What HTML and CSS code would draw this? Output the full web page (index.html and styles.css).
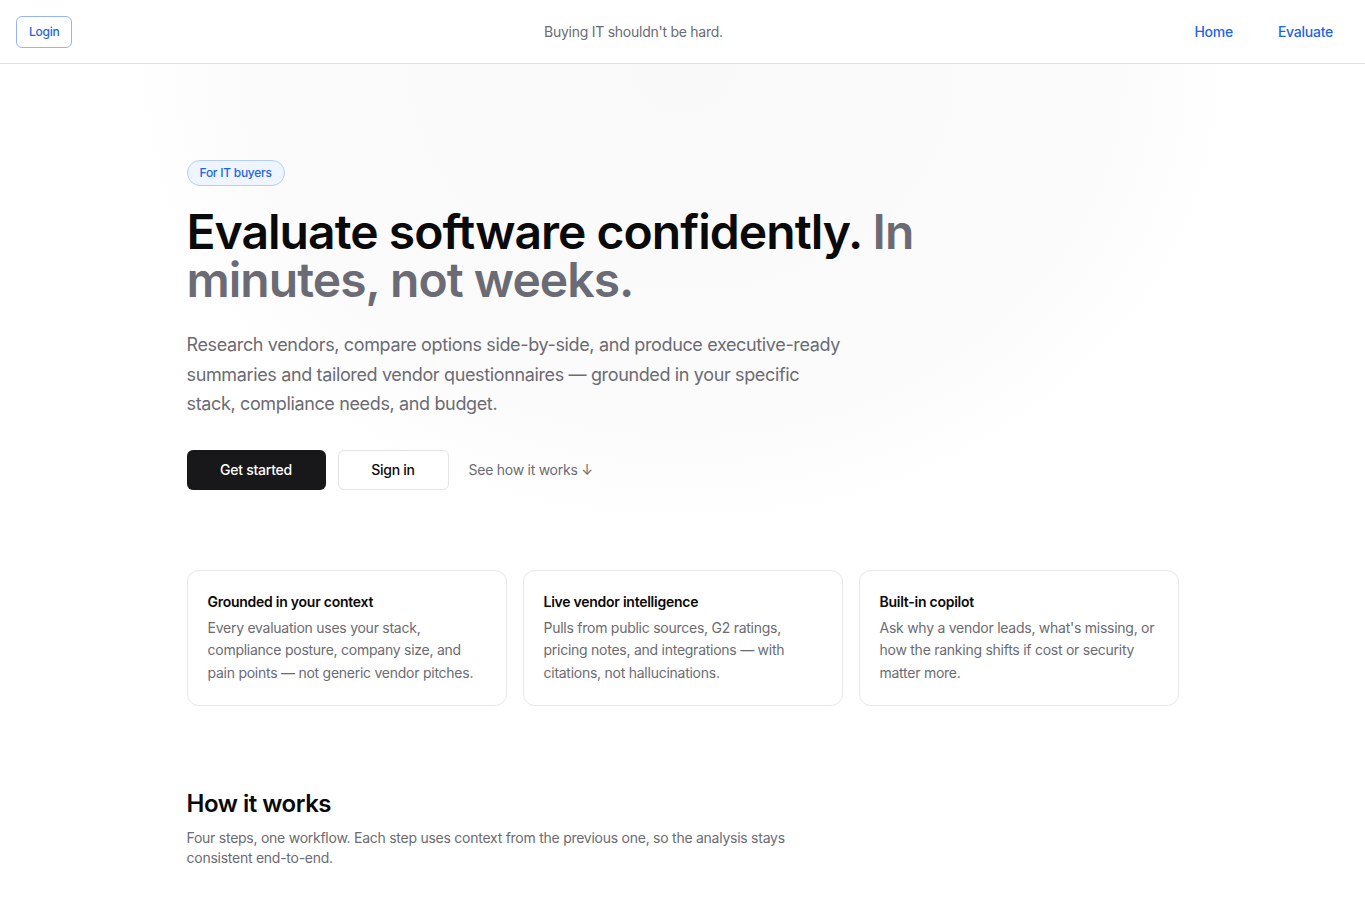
FILE: index.html
```html
<!DOCTYPE html>
<html lang="en">

<head>
    <meta charset="UTF-8">
    <meta name="viewport" content="width=device-width, initial-scale=1.0">
    <title>Buying IT shouldn't be hard</title>
    <link rel="stylesheet" href="styles.css">
</head>

<body>
    <header class="topbar">
        <a class="login" href="#">Login</a>
        <span class="tagline">Buying IT shouldn't be hard.</span>
        <nav class="nav">
            <a href="#">Home</a>
            <a href="#">Evaluate</a>
        </nav>
    </header>

    <main>
        <section class="hero">
            <div class="wrap">
                <span class="badge">For IT buyers</span>
                <h1>Evaluate software confidently. <span class="muted">In minutes, not weeks.</span></h1>
                <p class="lead">Research vendors, compare options side-by-side, and produce executive-ready summaries and tailored vendor questionnaires — grounded in your specific stack, compliance needs, and budget.</p>
                <div class="actions">
                    <a class="btn btn-dark" href="#">Get started</a>
                    <a class="btn btn-light" href="#">Sign in</a>
                    <a class="link" href="#how">See how it works ↓</a>
                </div>
            </div>
        </section>

        <section class="wrap features">
            <div class="card">
                <h3>Grounded in your context</h3>
                <p>Every evaluation uses your stack, compliance posture, company size, and pain points — not generic vendor pitches.</p>
            </div>
            <div class="card">
                <h3>Live vendor intelligence</h3>
                <p>Pulls from public sources, G2 ratings, pricing notes, and integrations — with citations, not hallucinations.</p>
            </div>
            <div class="card">
                <h3>Built-in copilot</h3>
                <p>Ask why a vendor leads, what's missing, or how the ranking shifts if cost or security matter more.</p>
            </div>
        </section>

        <section class="wrap how" id="how">
            <h2>How it works</h2>
            <p class="sub">Four steps, one workflow. Each step uses context from the previous one, so the analysis stays consistent end-to-end.</p>
            <div class="steps">
                <div class="step"><span class="num">1</span><h4>Describe your needs</h4><p>Tell us about your stack, team size, compliance requirements and budget.</p></div>
                <div class="step"><span class="num">2</span><h4>Research vendors</h4><p>We gather live data on the tools that fit your category.</p></div>
                <div class="step"><span class="num">3</span><h4>Compare side-by-side</h4><p>Weighted scoring across the criteria you care about.</p></div>
                <div class="step"><span class="num">4</span><h4>Share the result</h4><p>Export an executive summary and vendor questionnaire.</p></div>
            </div>
        </section>
    </main>
</body>

</html>
```

FILE: styles.css
```css
* {
    padding: 0;
    margin: 0;
    box-sizing: border-box;
}

body {
    font-family: Inter, "Noto Sans", sans-serif;
    letter-spacing: -0.016em;
    color: #0a0a0a;
    background-color: #fff;
}

a {
    text-decoration: none;
}

.topbar {
    height: 64px;
    padding: 0 16px;
    display: flex;
    align-items: center;
    justify-content: space-between;
    border-bottom: 1px solid #d6e2f3;
}

.login {
    height: 32px;
    padding: 0 12px;
    display: flex;
    align-items: center;
    font-size: 12px;
    font-weight: 500;
    color: #1d64e8;
    border: 1px solid #93b5f7;
    border-radius: 6px;
}

.tagline {
    font-size: 14px;
    color: #6b6b73;
}

.nav {
    display: flex;
    gap: 45px;
    padding-right: 16px;
}

.nav a {
    font-size: 14px;
    font-weight: 500;
    color: #1d64e8;
}

.wrap {
    width: 992px;
    margin: 0 auto;
}

.hero {
    padding: 96px 0 80px;
    background: radial-gradient(ellipse 560px 470px at 50% 0, #f9f9fa 0%, #fbfbfb 78%, rgba(255, 255, 255, 0) 100%);
}

.badge {
    display: inline-block;
    height: 26px;
    line-height: 24px;
    padding: 0 12px;
    font-size: 12px;
    font-weight: 500;
    color: #1d64e8;
    background-color: #eff5ff;
    border: 1px solid #b4cdfa;
    border-radius: 13px;
}

h1 {
    margin-top: 22px;
    width: 740px;
    font-size: 48px;
    line-height: 48px;
    font-weight: 600;
    letter-spacing: -0.02em;
    color: #0a0a0a;
}

h1 .muted {
    color: #6b6b75;
}

.lead {
    margin-top: 26px;
    max-width: 660px;
    font-size: 18px;
    line-height: 29.5px;
    letter-spacing: -0.02em;
    color: #6b6b73;
}

.actions {
    margin-top: 31px;
    display: flex;
    align-items: center;
}

.btn {
    height: 40px;
    display: flex;
    align-items: center;
    justify-content: center;
    font-size: 14px;
    font-weight: 500;
    border-radius: 6px;
}

.btn-dark {
    width: 139px;
    color: #fff;
    background-color: #18181b;
}

.btn-light {
    width: 111px;
    margin-left: 12px;
    color: #0a0a0a;
    background-color: #fff;
    border: 1px solid #e4e4e7;
}

.link {
    margin-left: 20px;
    font-size: 14px;
    color: #6b6b73;
}

.features {
    display: grid;
    grid-template-columns: repeat(3, 1fr);
    gap: 16px;
}

.card {
    height: 136px;
    padding: 21px 20px;
    border: 1px solid #e8e8eb;
    border-radius: 12px;
    background-color: #fff;
}

.card h3 {
    font-size: 14px;
    font-weight: 600;
    line-height: 20px;
}

.card p {
    margin-top: 5px;
    font-size: 14px;
    line-height: 22.5px;
    color: #6b6b73;
}

.how {
    padding-top: 82px;
    padding-bottom: 60px;
}

.how h2 {
    font-size: 24px;
    font-weight: 600;
    line-height: 32px;
    letter-spacing: -0.02em;
}

.sub {
    margin-top: 8px;
    max-width: 640px;
    font-size: 14px;
    line-height: 20px;
    color: #6b6b73;
}

.steps {
    margin-top: 32px;
    display: grid;
    grid-template-columns: repeat(4, 1fr);
    gap: 16px;
}

.step {
    padding: 20px;
    border: 1px solid #e8e8eb;
    border-radius: 12px;
}

.num {
    font-size: 12px;
    color: #6b6b73;
}

.step h4 {
    margin-top: 8px;
    font-size: 14px;
    font-weight: 600;
}

.step p {
    margin-top: 6px;
    font-size: 14px;
    line-height: 22px;
    color: #6b6b73;
}
```
